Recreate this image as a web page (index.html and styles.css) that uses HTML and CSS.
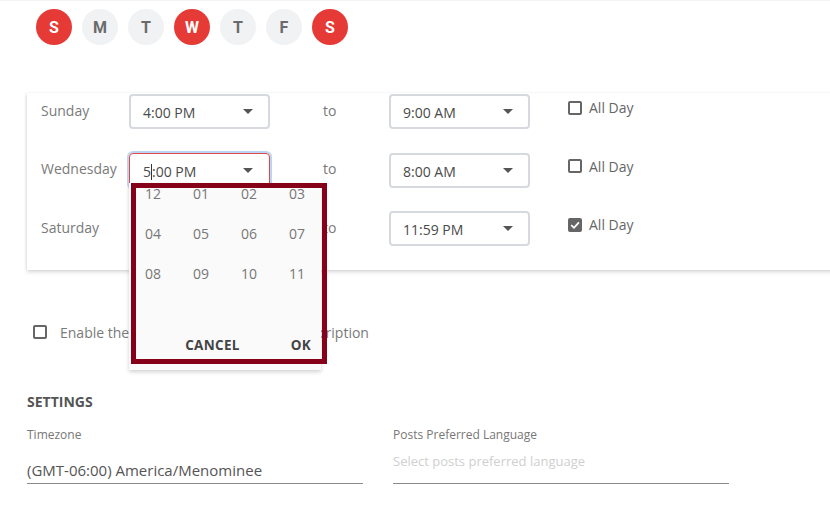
FILE: index.html
```html
<!DOCTYPE html>
<html lang="en">
<head>
<meta charset="utf-8">
<title>Schedule</title>
<link rel="stylesheet" href="styles.css">
</head>
<body>
<div class="page">
  <div class="days">
    <span class="day on">S</span>
    <span class="day">M</span>
    <span class="day">T</span>
    <span class="day on">W</span>
    <span class="day">T</span>
    <span class="day">F</span>
    <span class="day on">S</span>
  </div>

  <div class="card">
    <div class="row">
      <span class="label">Sunday</span>
      <div class="select"><span class="value">4:00 PM</span><span class="caret"></span></div>
      <span class="to">to</span>
      <div class="select"><span class="value">9:00 AM</span><span class="caret"></span></div>
      <label class="allday"><span class="box"></span>All Day</label>
    </div>
    <div class="row">
      <span class="label">Wednesday</span>
      <div class="select focus"><span class="value">5<i class="cursor"></i>:00 PM</span><span class="caret"></span></div>
      <span class="to">to</span>
      <div class="select"><span class="value">8:00 AM</span><span class="caret"></span></div>
      <label class="allday"><span class="box"></span>All Day</label>
    </div>
    <div class="row">
      <span class="label">Saturday</span>
      <div class="select"><span class="value">5:00 PM</span><span class="caret"></span></div>
      <span class="to">to</span>
      <div class="select"><span class="value">11:59 PM</span><span class="caret"></span></div>
      <label class="allday"><span class="box checked"><svg viewBox="0 0 14 14" width="14" height="14"><path d="M3.2 7.2 L6 9.8 L10.9 4.3" fill="none" stroke="#fff" stroke-width="1.8"/></svg></span>All Day</label>
    </div>
  </div>

  <label class="enable"><span class="box"></span>Enable the schedules for the email subscription</label>

  <h3 class="section">SETTINGS</h3>
  <div class="fields">
    <div class="field">
      <div class="field-label">Timezone</div>
      <div class="field-value">(GMT-06:00) America/Menominee</div>
    </div>
    <div class="field">
      <div class="field-label">Posts Preferred Language</div>
      <div class="field-placeholder">Select posts preferred language</div>
    </div>
  </div>

  <div class="picker">
    <div class="hours">
      <span>12</span><span>01</span><span>02</span><span>03</span>
      <span>04</span><span>05</span><span>06</span><span>07</span>
      <span>08</span><span>09</span><span>10</span><span>11</span>
    </div>
    <div class="actions">
      <span class="btn">CANCEL</span>
      <span class="btn">OK</span>
    </div>
  </div>
  <div class="highlight"></div>
</div>
</body>
</html>
```

FILE: styles.css
```css
html, body {
  margin: 0;
  padding: 0;
  background: #fff;
  overflow: hidden;
}

.page {
  position: relative;
  width: 830px;
  height: 522px;
  font-family: "Open Sans", "Liberation Sans", sans-serif;
  color: #555;
  box-shadow: inset 0 1px 0 #f4f4f4;
}

/* weekday toggles */
.days {
  display: flex;
  gap: 10px;
  padding: 9px 0 0 36px;
}

.day {
  width: 36px;
  height: 36px;
  border-radius: 50%;
  background: #f1f2f4;
  color: #6b6b6b;
  font-family: Roboto, "Liberation Sans", sans-serif;
  font-weight: 700;
  font-size: 16px;
  display: flex;
  align-items: center;
  justify-content: center;
}

.day.on {
  background: #e53a35;
  color: #fff;
}

/* time ranges card */
.card {
  margin: 48px -30px 0 27px;
  padding: 1px 0 24px 14px;
  background: #fff;
  box-shadow: 0 2px 4px rgba(0, 0, 0, 0.16), -1px 0 2px rgba(0, 0, 0, 0.05);
  display: flex;
  flex-direction: column;
  gap: 23.5px;
}

.row {
  display: flex;
  align-items: center;
  height: 35px;
}

.label {
  width: 88px;
  font-size: 14px;
  color: #7a7a7a;
  padding-bottom: 3px;
}

.select {
  width: 141px;
  height: 35px;
  box-sizing: border-box;
  border: 2px solid #d6d9dd;
  border-radius: 4px;
  display: flex;
  align-items: center;
  justify-content: space-between;
  padding: 2px 15px 0 12px;
  font-size: 14px;
  color: #4a4a4a;
}

.select.focus {
  border: 1px solid #e04848;
  padding-left: 13px;
  padding-right: 16px;
  box-shadow: 0 0 0 2px #b9d6f7;
}

.cursor {
  display: inline-block;
  width: 1px;
  height: 16px;
  background: #333;
  vertical-align: -3px;
}

.caret {
  width: 0;
  height: 0;
  border-left: 5px solid transparent;
  border-right: 5px solid transparent;
  border-top: 5px solid #555;
  margin-top: -2px;
}

.to {
  margin-left: 53px;
  width: 66px;
  font-size: 14px;
  color: #7a7a7a;
  padding-bottom: 3px;
}

.allday {
  display: flex;
  align-items: center;
  gap: 7px;
  margin-left: 38px;
  font-size: 14px;
  color: #666;
  padding-bottom: 8px;
}

.box {
  width: 14px;
  height: 14px;
  box-sizing: border-box;
  border: 2px solid #666;
  border-radius: 2px;
  display: inline-block;
  position: relative;
}

.box.checked {
  background: #666;
  border-color: #666;
}

.box.checked svg {
  position: absolute;
  left: -2px;
  top: -2px;
}

/* subscription toggle */
.enable {
  display: flex;
  align-items: center;
  gap: 13px;
  margin: 52px 0 0 33px;
  font-size: 14px;
  color: #7a7a7a;
  height: 20px;
}

/* settings */
.section {
  margin: 50px 0 0 27px;
  font-size: 14px;
  font-weight: 700;
  color: #555;
  line-height: 20px;
}

.fields {
  display: flex;
  gap: 30px;
  margin: 14px 0 0 27px;
}

.field {
  width: 336px;
}

.field-label {
  font-size: 12px;
  line-height: 17px;
  color: #777;
}

.field-value {
  margin-top: 13px;
  padding-top: 1px;
  height: 26px;
  line-height: 26px;
  font-size: 15px;
  color: #555;
  border-bottom: 1px solid #8a8a8a;
}

.field-placeholder {
  margin-top: 8px;
  line-height: 20px;
  padding-bottom: 12px;
  font-size: 13px;
  color: #cfcfcf;
  border-bottom: 1px solid #8a8a8a;
}

/* hour picker popup */
.picker {
  position: absolute;
  left: 129px;
  top: 183px;
  width: 192px;
  height: 187px;
  background: #fafafa;
  box-shadow: 0 2px 4px rgba(0, 0, 0, 0.18);
  overflow: hidden;
  display: flex;
  flex-direction: column;
}

.hours {
  display: grid;
  grid-template-columns: repeat(4, 48px);
  grid-auto-rows: 40px;
  margin-top: -10px;
  font-size: 14px;
  color: #777;
}

.hours span {
  display: flex;
  align-items: center;
  justify-content: center;
}

.actions {
  margin-top: auto;
  display: flex;
  justify-content: flex-end;
  gap: 51px;
  padding: 0 10px 16px 0;
  font-size: 13.5px;
  font-weight: 700;
  color: #444;
  letter-spacing: 0.3px;
}

.highlight {
  position: absolute;
  left: 131px;
  top: 183px;
  width: 196px;
  height: 181px;
  box-sizing: border-box;
  border: 5px solid #87001a;
}
```
